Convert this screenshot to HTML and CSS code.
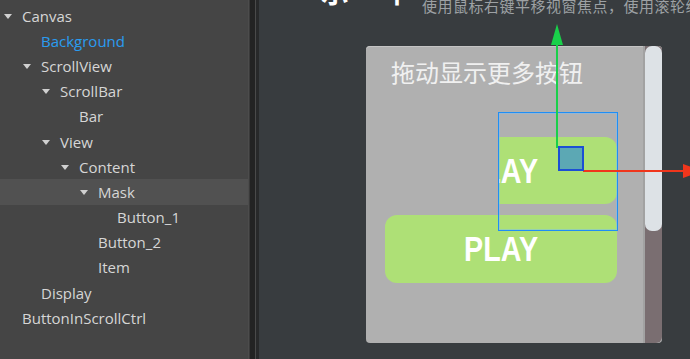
FILE: index.html
```html
<!DOCTYPE html>
<html lang="zh">
<head>
    <meta charset="UTF-8">
    <title>ScrollView</title>
    <link rel="stylesheet" href="styles.css">
</head>
<body>
<div class="hierarchy">
    <div class="row l0"><i class="arrow"></i>Canvas</div>
    <div class="row l1 selected"><i class="arrow none"></i>Background</div>
    <div class="row l1"><i class="arrow"></i>ScrollView</div>
    <div class="row l2"><i class="arrow"></i>ScrollBar</div>
    <div class="row l3"><i class="arrow none"></i>Bar</div>
    <div class="row l2"><i class="arrow"></i>View</div>
    <div class="row l3"><i class="arrow"></i>Content</div>
    <div class="row l4 hover"><i class="arrow"></i>Mask</div>
    <div class="row l5"><i class="arrow none"></i>Button_1</div>
    <div class="row l4"><i class="arrow none"></i>Button_2</div>
    <div class="row l4"><i class="arrow none"></i>Item</div>
    <div class="row l1"><i class="arrow none"></i>Display</div>
    <div class="row l0"><i class="arrow none"></i>ButtonInScrollCtrl</div>
</div>
<div class="divider"></div>
<div class="scene">
    <div class="title-bits"><span class="t1">示</span><span class="t2">平</span></div>
    <div class="hint">使用鼠标右键平移视窗焦点，使用滚轮缩放视图</div>

    <div class="scrollview">
        <div class="view">
            <div class="caption">拖动显示更多按钮</div>
            <div class="btn masked"><span>PLAY</span></div>
            <div class="btn"><span>PLAY</span></div>
        </div>
        <div class="scrollbar">
            <div class="thumb"></div>
        </div>
    </div>

    <!-- selection gizmo -->
    <div class="select-rect"></div>
    <div class="axis-y"></div>
    <div class="axis-y-head"></div>
    <div class="axis-x"></div>
    <div class="axis-x-head"></div>
    <div class="origin"></div>
</div>
</body>
</html>
```

FILE: styles.css
```css
html,body{margin:0;padding:0;}
body{display:flex;height:359px;overflow:hidden;background:#383c3f;font-family:"Open Sans","Noto Sans CJK SC",sans-serif;}

.hierarchy{width:248px;flex:none;background:#454545;padding-top:3px;box-sizing:border-box;}
.row{height:25.2px;display:flex;align-items:center;font-size:15px;color:#d6d6d6;white-space:nowrap;}
.row.selected{color:#2a9cf0;}
.row.hover{background:#515151;}
.arrow{width:0;height:0;border-left:4px solid transparent;border-right:4px solid transparent;border-top:5px solid #d0d0d0;margin-right:10px;margin-top:1px;}
.arrow.none{border-top-color:transparent;}
.l0{padding-left:4px;}
.l1{padding-left:23px;}
.l2{padding-left:42px;}
.l3{padding-left:61px;}
.l4{padding-left:80px;}
.l5{padding-left:99px;}

.divider{width:11px;flex:none;background:linear-gradient(to right,#4c4c4c 0 1px,#3a3a3a 1px 2px,#232323 2px 7px,#4a4a4a 7px 8px,#28292a 8px 11px);}

.scene{flex:1;position:relative;overflow:hidden;background:#383c3f;}

.title-bits{position:absolute;left:62px;top:-23px;font-size:28px;font-weight:bold;color:#fff;line-height:28px;font-family:"Noto Sans CJK SC",sans-serif;}
.title-bits .t2{margin-left:34px;}
.hint{position:absolute;left:163px;top:-3px;font-size:15px;line-height:18px;letter-spacing:0.5px;color:#9da1a4;white-space:nowrap;font-family:"Noto Sans CJK SC",sans-serif;}

.scrollview{position:absolute;left:107px;top:46px;width:296px;height:297px;display:flex;background:#b0b0b0;border-radius:4px;overflow:hidden;box-shadow:inset 0 1px 0 #c4c4c4;}
.view{flex:1;padding:14px 0 0 19px;}
.caption{font-size:24px;line-height:24px;margin-left:6px;color:#f0f0f0;font-family:"Noto Sans CJK SC",sans-serif;}
.btn{width:232px;height:68px;background:#aee076;border-radius:12px;display:flex;align-items:center;justify-content:center;margin-top:11px;}
.btn.masked{margin-top:53px;height:67px;clip-path:inset(0 0 0 114px);}
.btn span{font-family:"Liberation Sans",sans-serif;font-weight:bold;font-size:35px;color:#fff;transform:scaleX(0.82);display:inline-block;line-height:36px;}

.scrollbar{width:19px;flex:none;background:#7a6e71;border-left:2px solid #a2a2a2;box-sizing:border-box;border-radius:0 0 6px 0;}
.thumb{height:185px;background:#dde2e6;border-radius:7px;}

.select-rect{position:absolute;left:239px;top:112px;width:118px;height:117px;border:1px solid #1f8ef5;box-shadow:inset 0 0 0 1px rgba(120,190,255,.45);}
.axis-y{position:absolute;left:297px;top:40px;width:2px;height:108px;background:#19d04a;}
.axis-y-head{position:absolute;left:292px;top:24px;width:0;height:0;border-left:6px solid transparent;border-right:6px solid transparent;border-bottom:21px solid #19d04a;}
.axis-x{position:absolute;left:324px;top:170px;width:102px;height:2px;background:#f0361c;}
.axis-x-head{position:absolute;left:424px;top:164px;width:0;height:0;border-top:7px solid transparent;border-bottom:7px solid transparent;border-left:20px solid #f0361c;}
.origin{position:absolute;left:299px;top:146px;width:22px;height:21px;border:2px solid #1c4fd4;background:#5ca8b4;}
```
